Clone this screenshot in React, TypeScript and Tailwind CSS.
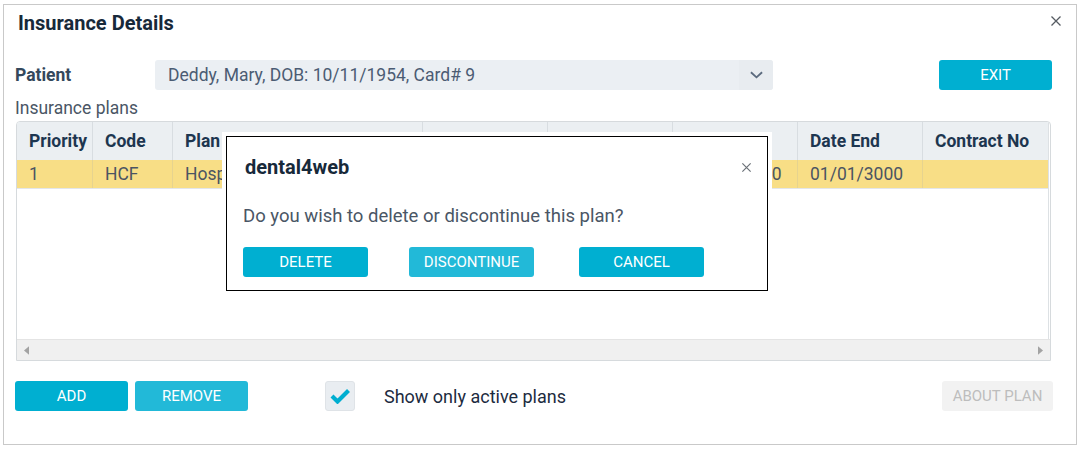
import { useState } from 'react';

const columns = [
  { key: 'priority', label: 'Priority', width: 'w-[76px]' },
  { key: 'code', label: 'Code', width: 'w-[80px]' },
  { key: 'plan', label: 'Plan', width: 'w-[250px]' },
  { key: 'member', label: 'Member No', width: 'w-[125px]' },
  { key: 'level', label: 'Level', width: 'w-[125px]' },
  { key: 'start', label: 'Date Start', width: 'w-[125px]' },
  { key: 'end', label: 'Date End', width: 'w-[125px]' },
  { key: 'contract', label: 'Contract No', width: 'w-[125px]' },
];

const rows = [
  {
    priority: '1',
    code: 'HCF',
    plan: 'Hospital Contribution Fund',
    member: '123456789',
    level: 'Top',
    start: '01/01/2000',
    end: '01/01/3000',
    contract: '',
  },
];

const CloseIcon = ({ className }: { className?: string }) => (
  <svg viewBox="0 0 12 12" className={className} fill="none" stroke="currentColor" strokeWidth="1.3">
    <path d="M1.5 1.5l9 9M10.5 1.5l-9 9" />
  </svg>
);

const ActionButton = ({ label, light, width }: { label: string; light?: boolean; width: string }) => (
  <button
    className={`${width} h-[30px] rounded-[3px] text-white text-[15px] uppercase ${
      light ? 'bg-[#22b9d8]' : 'bg-[#00afd1]'
    }`}
  >
    {label}
  </button>
);

export default function App() {
  const [onlyActive, setOnlyActive] = useState(true);

  return (
    <div className="w-[1081px] h-[451px] bg-white pl-[3px] pt-[4px] font-['Roboto',sans-serif]">
      <div className="relative w-[1074px] h-[441px] border border-[#c9c9c9] pl-[11px]">
        {/* header */}
        <div className="flex items-center justify-between h-[36px]">
          <h1 className="ml-[3px] text-[20px] font-bold text-[#17293a]">Insurance Details</h1>
          <CloseIcon className="w-[12px] h-[12px] mr-[14px] mb-[4px] text-[#555b62]" />
        </div>

        {/* patient */}
        <div className="flex items-center h-[30px] mt-[19px]">
          <span className="w-[140px] text-[17.5px] font-bold text-[#34485c]">Patient</span>
          <div className="flex items-center w-[618px] h-[30px] rounded-[3px] bg-[#ebeff3]">
            <span className="flex-1 pl-[13px] text-[17.5px] text-[#4b5c73]">Deddy, Mary, DOB: 10/11/1954, Card# 9</span>
            <div className="flex items-center justify-center w-[34px] h-full rounded-r-[3px] bg-[#e8ecf0]">
              <svg viewBox="0 0 14 8" className="w-[13px] h-[8px]" fill="none" stroke="#5b6a7e" strokeWidth="2">
                <path d="M1 1l6 5.5L13 1" />
              </svg>
            </div>
          </div>
          <div className="ml-[166px]">
            <ActionButton label="Exit" width="w-[113px]" />
          </div>
        </div>

        {/* plans table */}
        <div className="mt-[8px] h-[20px] leading-[20px] text-[17.5px] text-[#4a5665]">Insurance plans</div>
        <div className="mt-[3px] ml-[1px] w-[1035px] h-[240px] flex flex-col border border-[#d6dadd] rounded-t-[4px] overflow-hidden">
          <div className="flex-1 w-[1032px] border-r border-[#dde1e4]">
            <div className="flex h-[38px] bg-[#ebeff2]">
              {columns.map((c, i) => (
                <div
                  key={c.key}
                  className={`${c.width} flex items-center pl-[12px] text-[17.5px] font-bold text-[#1d3650] whitespace-nowrap overflow-hidden ${
                    i < columns.length - 1 ? 'border-r border-[#d8dde1]' : ''
                  }`}
                >
                  {c.label}
                </div>
              ))}
            </div>
            {rows.map((r) => (
              <div key={r.code} className="flex h-[29px] bg-[#f8de86] border-b border-[#e3e6e9]">
                {columns.map((c, i) => (
                  <div
                    key={c.key}
                    className={`${c.width} flex items-center text-[17.5px] text-[#4b5462] whitespace-nowrap overflow-hidden ${
                      c.key === 'start' ? 'justify-center' : 'pl-[12px]'
                    } ${i < columns.length - 1 ? 'border-r border-[#e6d38f]' : ''}`}
                  >
                    {r[c.key as keyof typeof r]}
                  </div>
                ))}
              </div>
            ))}
          </div>
          <div className="flex items-center justify-between h-[21px] bg-[#f0f0f0] border-t border-[#e4e4e4] px-[7px]">
            <svg viewBox="0 0 6 10" className="w-[5px] h-[9px]" fill="#a3a3a3">
              <path d="M6 0v10L0 5z" />
            </svg>
            <svg viewBox="0 0 6 10" className="w-[5px] h-[9px]" fill="#a3a3a3">
              <path d="M0 0v10l6-5z" />
            </svg>
          </div>
        </div>

        {/* footer */}
        <div className="flex items-center mt-[20px] h-[30px]">
          <ActionButton label="Add" width="w-[113px]" />
          <div className="ml-[7px]">
            <ActionButton label="Remove" light width="w-[113px]" />
          </div>
          <button
            onClick={() => setOnlyActive(!onlyActive)}
            className="ml-[77px] flex items-center justify-center w-[30px] h-[30px] rounded-[3px] bg-[#e9edf1] border border-[#dfe3e7]"
          >
            {onlyActive && (
              <svg viewBox="0 0 20 16" className="w-[20px] h-[16px]" fill="none" stroke="#00aed0" strokeWidth="4.2">
                <path d="M2 8l5.5 5.5L18.5 2.5" />
              </svg>
            )}
          </button>
          <span className="ml-[29px] text-[18px] text-[#1c2b40]">Show only active plans</span>
          <button className="ml-auto mr-[23px] w-[111px] h-[30px] rounded-[3px] bg-[#f2f2f2] text-[15px] text-[#bdbdbd]">
            ABOUT PLAN
          </button>
        </div>

        {/* confirm dialog */}
        <div className="absolute left-[218px] top-[127px] bg-white p-[4px]">
          <div className="w-[542px] h-[155px] border border-black bg-white pl-[16px]">
            <div className="flex items-center justify-between h-[24px] mt-[18px]">
              <span className="ml-[2px] text-[20px] font-bold text-[#17293a]">dental4web</span>
              <CloseIcon className="w-[11px] h-[11px] mr-[15px] text-[#6b7178]" />
            </div>
            <div className="mt-[27px] h-[20px] leading-[20px] text-[18.5px] text-[#4a5665]">
              Do you wish to delete or discontinue this plan?
            </div>
            <div className="flex mt-[21px]">
              <ActionButton label="Delete" width="w-[125px]" />
              <div className="ml-[41px]">
                <ActionButton label="Discontinue" light width="w-[125px]" />
              </div>
              <div className="ml-[45px]">
                <ActionButton label="Cancel" width="w-[125px]" />
              </div>
            </div>
          </div>
        </div>
      </div>
    </div>
  );
}
